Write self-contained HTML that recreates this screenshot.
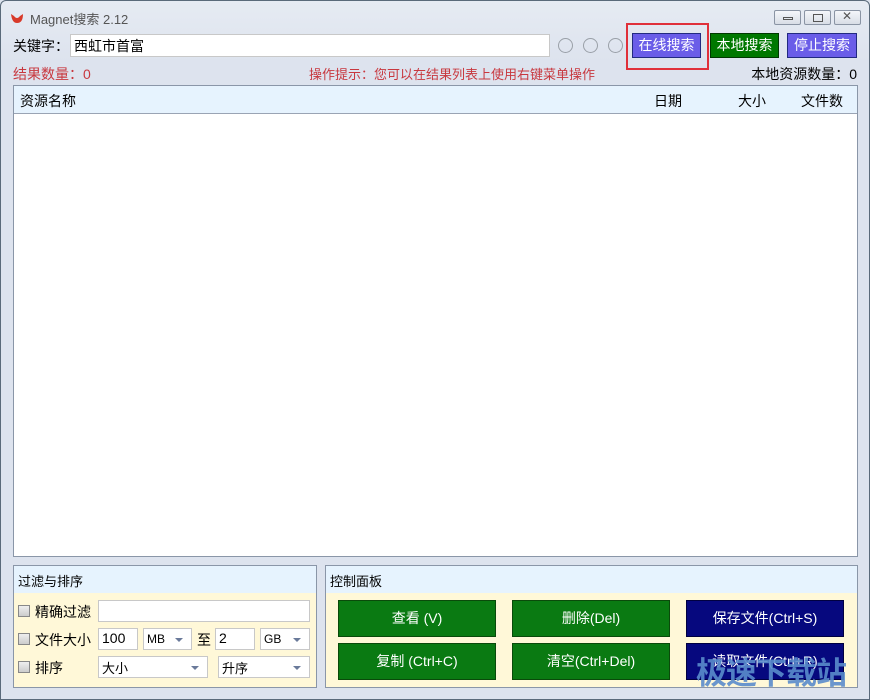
<!DOCTYPE html><html><head><meta charset="utf-8"><style>
*{margin:0;padding:0;box-sizing:border-box}
body{width:870px;height:700px;overflow:hidden;background:#dde3ee;font-family:"Liberation Sans","Microsoft YaHei","Noto Sans CJK SC",sans-serif;font-size:14px;color:#000;position:relative}
.a{position:absolute;white-space:nowrap}
.win{position:absolute;left:0;top:0;width:870px;height:700px;border:1px solid #5a6a7a;border-radius:6px 6px 0 0;background:linear-gradient(#e6ebf3,#dde3ee 60px)}
.wb{position:absolute;top:10px;width:27px;height:15px;border:1px solid #8a94a4;border-radius:2px;background:linear-gradient(#f4f6fa,#d8dde6)}
.btn{position:absolute;color:#fff;text-align:center;font-size:14px}
.circ{position:absolute;width:15px;height:15px;border:1px solid #9aa0a8;border-radius:50%;top:38px}
.cb{position:absolute;width:12px;height:12px;border:1px solid #888;background:linear-gradient(#eee,#ccc)}
.inp{position:absolute;background:#fff;border:1px solid #c8c8c8;height:22px;font-size:14px;padding:1px 3px}
.dd::after{content:"";position:absolute;right:8px;top:9px;border:4px solid transparent;border-top:4px solid #6a7a9a}
.gb{position:absolute;background:#0a7a12;border:1px solid #0a4a0a;color:#fff;text-align:center;line-height:34px}
.bb{position:absolute;background:#06087e;border:1px solid #000040;color:#fff;text-align:center;line-height:34px}
</style></head><body>
<div class="win"></div>
<svg class="a" style="left:10px;top:11px" width="14" height="13"><path d="M1 3 Q2 12 7 12 Q13 12 13 3 L10 5 Q7 9 4 5Z" fill="#d83a2a"/></svg>
<div class="a" style="left:30px;top:9px;font-size:13px;color:#555">Magnet搜索 2.12</div>
<div class="wb" style="left:774px"><div class="a" style="left:8px;top:6px;width:10px;height:3px;border:1px solid #555"></div></div>
<div class="wb" style="left:804px"><div class="a" style="left:8px;top:3px;width:10px;height:8px;border:1px solid #555"></div></div>
<div class="wb" style="left:834px"><div class="a" style="left:7px;top:-2px;font-size:12px;color:#555">✕</div></div>
<div class="a" style="left:13px;top:36px">关键字：</div>
<div class="inp" style="left:70px;top:34px;width:480px;height:23px">西虹市首富</div>
<div class="circ" style="left:558px"></div><div class="circ" style="left:583px"></div><div class="circ" style="left:608px"></div>
<div class="a" style="left:626px;top:23px;width:83px;height:47px;border:2px solid #e0303a"></div>
<div class="btn" style="left:632px;top:33px;width:69px;height:25px;line-height:23px;background:#6a5de8;border:1px solid #222a80">在线搜索</div>
<div class="btn" style="left:710px;top:33px;width:69px;height:25px;line-height:23px;background:#007800;border:1px solid #003800">本地搜索</div>
<div class="btn" style="left:787px;top:33px;width:70px;height:25px;line-height:23px;background:#6a5de8;border:1px solid #222a80">停止搜索</div>
<div class="a" style="left:13px;top:64px;color:#c8383f">结果数量：0</div>
<div class="a" style="left:309px;top:64px;color:#c8383f;font-size:13px">操作提示：您可以在结果列表上使用右键菜单操作</div>
<div class="a" style="right:13px;top:64px">本地资源数量：0</div>
<div class="a" style="left:13px;top:85px;width:845px;height:472px;background:#fff;border:1px solid #8a96a8"></div>
<div class="a" style="left:14px;top:86px;width:843px;height:28px;background:#e6f3fe;border-bottom:1px solid #9aa4b4"></div>
<div class="a" style="left:20px;top:91px">资源名称</div>
<div class="a" style="left:654px;top:91px">日期</div>
<div class="a" style="left:738px;top:91px">大小</div>
<div class="a" style="left:801px;top:91px">文件数</div>
<div class="a" style="left:13px;top:565px;width:304px;height:123px;background:#fff8d8;border:1px solid #8a96a8"></div>
<div class="a" style="left:14px;top:566px;width:302px;height:27px;background:#e6f3fe"></div>
<div class="a" style="left:18px;top:571px;font-size:13px">过滤与排序</div>
<div class="a" style="left:325px;top:565px;width:533px;height:123px;background:#fff8d8;border:1px solid #8a96a8"></div>
<div class="a" style="left:326px;top:566px;width:531px;height:27px;background:#e6f3fe"></div>
<div class="a" style="left:330px;top:571px;font-size:13px">控制面板</div>
<div class="cb" style="left:18px;top:605px"></div><div class="a" style="left:35px;top:602px">精确过滤</div>
<div class="inp" style="left:98px;top:600px;width:212px"></div>
<div class="cb" style="left:18px;top:633px"></div><div class="a" style="left:35px;top:630px">文件大小</div>
<div class="inp" style="left:98px;top:628px;width:40px">100</div>
<div class="inp dd" style="left:143px;top:628px;width:49px;font-size:12px;padding-top:3px">MB</div>
<div class="a" style="left:197px;top:630px">至</div>
<div class="inp" style="left:215px;top:628px;width:40px">2</div>
<div class="inp dd" style="left:260px;top:628px;width:50px;font-size:12px;padding-top:3px">GB</div>
<div class="cb" style="left:18px;top:661px"></div><div class="a" style="left:35px;top:658px">排序</div>
<div class="inp dd" style="left:98px;top:656px;width:110px;font-size:13px">大小</div>
<div class="inp dd" style="left:218px;top:656px;width:92px;font-size:13px">升序</div>
<div class="gb" style="left:338px;top:600px;width:158px;height:37px">查看 (V)</div>
<div class="gb" style="left:512px;top:600px;width:158px;height:37px">删除(Del)</div>
<div class="bb" style="left:686px;top:600px;width:158px;height:37px">保存文件(Ctrl+S)</div>
<div class="gb" style="left:338px;top:643px;width:158px;height:37px">复制 (Ctrl+C)</div>
<div class="gb" style="left:512px;top:643px;width:158px;height:37px">清空(Ctrl+Del)</div>
<div class="bb" style="left:686px;top:643px;width:158px;height:37px">读取文件(Ctrl+R)</div>
<div class="a" style="left:696px;top:648px;font-size:31px;font-weight:bold;color:#5a8ccc;opacity:.9;letter-spacing:-1px">极速下载站</div>
</body></html>
